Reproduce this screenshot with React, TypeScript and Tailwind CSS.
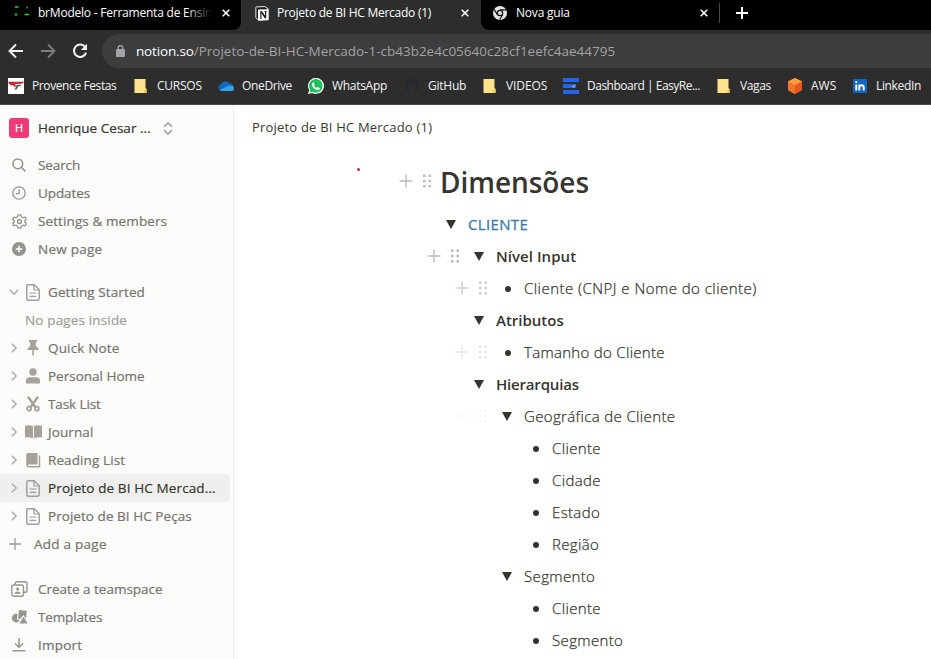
import type { ReactNode } from "react";

const ui = "font-['Open_Sans','Noto_Sans',sans-serif]";

function CloseIcon() {
  return (
    <svg width="8" height="8" viewBox="0 0 8 8" className="shrink-0">
      <path d="M.7 .7L7.3 7.3M7.3 .7L.7 7.3" stroke="#fff" strokeWidth="1.6" />
    </svg>
  );
}

function ChromeIcon() {
  return (
    <svg width="14" height="14" viewBox="0 0 14 14" className="shrink-0">
      <circle cx="7" cy="7" r="7" fill="#e4e6e9" />
      <circle cx="7" cy="7" r="3.3" fill="#111" />
      <circle cx="7" cy="7" r="2.1" fill="#e4e6e9" />
      <path d="M7 3.9H13.2M9.7 8.6L6.6 13.7M4.3 8.6L1.2 3.4" stroke="#111" strokeWidth="1.1" fill="none" />
    </svg>
  );
}

function NotionIcon() {
  return (
    <svg width="14" height="15" viewBox="0 0 14 15" className="shrink-0">
      <path d="M1.2 .9L9.8 .6L13.2 2.8V13.8L3.4 14.3L.9 11.5V1.4Z" fill="#161616" stroke="#f4f4f4" strokeWidth="1" />
      <path d="M3 3.6L13.2 3.2V13.8L3 14.3Z" fill="#fff" />
      <path d="M4.9 5.2H7L10 9.6V5.9L9.2 5.3V4.9H11.8V5.4L11.2 5.8V12.3H9.8L6.4 7.3V11.7L7.3 12.1V12.6H4.7V12.1L5.3 11.7V5.9L4.9 5.7Z" fill="#161616" />
    </svg>
  );
}

function TabStrip() {
  return (
    <div className="flex h-[30px] bg-black text-[12px] text-white">
      <div className="flex w-[241px] bg-[#2d2d2d]">
        <div className="flex w-full items-center rounded-br-[8px] bg-black pr-[11px] pb-[4px] pl-[14px]">
          <svg width="16" height="14" viewBox="0 0 16 14" className="shrink-0">
            <path d="M1 1H4.5M12.5 1.5H14M10.5 8.5H15" stroke="#18d52c" strokeWidth="1.5" />
            <path d="M1 8.5H3" stroke="#18d52c" strokeWidth="1.8" />
          </svg>
          <div className="relative ml-[8px] h-[18px] w-[174px] shrink-0 leading-[18px] tracking-[-0.22px] whitespace-nowrap">
            brModelo - Ferramenta de Ensin
            <div className="absolute top-0 right-0 h-full w-[26px] bg-linear-to-r from-transparent to-black" />
          </div>
          <div className="ml-auto"><CloseIcon /></div>
        </div>
      </div>
      <div className="flex w-[240px] items-center bg-[#2d2d2d] pr-[12px] pb-[4px] pl-[14px]">
        <NotionIcon />
        <span className="ml-[8px] tracking-[-0.25px] whitespace-nowrap">Projeto de BI HC Mercado (1)</span>
        <div className="ml-auto"><CloseIcon /></div>
      </div>
      <div className="flex flex-1 bg-[#2d2d2d]">
        <div className="flex flex-1 items-center rounded-bl-[8px] bg-black pb-[4px] pl-[12px]">
          <ChromeIcon />
          <span className="ml-[9px] w-[184px] tracking-[-0.2px]">Nova guia</span>
          <CloseIcon />
          <div className="ml-[11px] h-[20px] w-px bg-[#4c4c4c]" />
          <svg width="12" height="12" viewBox="0 0 12 12" className="ml-[16px]">
            <path d="M6 0V12M0 6H12" stroke="#fff" strokeWidth="2" />
          </svg>
        </div>
      </div>
    </div>
  );
}

function AddressBar() {
  return (
    <div className="flex h-[38px] items-start bg-[#2d2d2d] pt-[4px]">
      <div className="flex h-[34px] w-[102px] items-center pl-[8px]">
        <svg width="16" height="16" viewBox="0 0 16 16">
          <path d="M15 8H2M8 1.5L1.5 8L8 14.5" stroke="#f1f1f1" strokeWidth="1.9" fill="none" />
        </svg>
        <svg width="16" height="16" viewBox="0 0 16 16" className="ml-[16px]">
          <path d="M1 8H14M8 1.5L14.5 8L8 14.5" stroke="#7c7c7c" strokeWidth="1.8" fill="none" />
        </svg>
        <svg width="16" height="16" viewBox="0 0 16 16" className="ml-[16px]">
          <path d="M13.2 4.1A6.2 6.2 0 1 0 14.1 9.6" stroke="#f1f1f1" strokeWidth="2" fill="none" />
          <path d="M15 .8V7H8.8Z" fill="#f1f1f1" />
        </svg>
      </div>
      <div className="flex h-[34px] flex-1 items-center rounded-l-full bg-[#3d3d3d] pl-[14px]">
        <svg width="9" height="12" viewBox="0 0 9 12">
          <rect y="4" width="9" height="8" rx="1" fill="#a2a3a6" />
          <path d="M2.2 5V2.8A2.3 2.3 0 0 1 6.8 2.8V5" stroke="#a2a3a6" strokeWidth="1.3" fill="none" />
        </svg>
        <span className="ml-[11px] text-[13.5px] whitespace-nowrap text-[#a2a3a5]">
          <span className="tracking-[-0.16px] text-white">notion.so</span>/Projeto-de-BI-HC-Mercado-1-cb43b2e4c05640c28cf1eefc4ae44795
        </span>
      </div>
    </div>
  );
}

function FolderIcon() {
  return (
    <svg width="16" height="16" viewBox="0 0 16 16">
      <path d="M1.5 1H12.5V10L13.5 11V15H1.5Z" fill="#ffe38c" />
      <path d="M12 10.5L13.5 11V15H10.8Z" fill="#f5cb55" />
    </svg>
  );
}

function Bookmark({ icon, label, className }: { icon: ReactNode; label: string; className: string }) {
  return (
    <div className={`flex shrink-0 items-center gap-[8px] whitespace-nowrap ${className}`}>
      {icon}
      <span>{label}</span>
    </div>
  );
}

function BookmarksBar() {
  return (
    <div className="flex h-[37px] items-center border-b border-[#4a4747] bg-[#2d2d2d] pl-[8px] text-[12px] text-[#f3f3f3]">
      <Bookmark className="w-[125px] tracking-[-0.4px]" label="Provence Festas" icon={
        <svg width="16" height="16" viewBox="0 0 16 16">
          <path d="M0 0H16V16H0Z" fill="#fff" />
          <path d="M0 3.8H16Q15.2 5.6 13.4 5.8L6.8 5.9L8 7.4L7 9.6L5.6 7.6L2.6 7.2Q.8 5.9 0 3.8Z" fill="#c42a36" />
          <path d="M8.6 6.8H13.2L12.4 8.2H10.2L9.8 9.6L8.3 11.8L6.6 11.6L8 9Z" fill="#55545a" />
        </svg>} />
      <Bookmark className="w-[85px] tracking-[-0.25px]" label="CURSOS" icon={<FolderIcon />} />
      <Bookmark className="w-[90px] tracking-[-0.35px]" label="OneDrive" icon={
        <svg width="16" height="16" viewBox="0 0 16 16">
          <path d="M3.2 12.5A3.2 3.2 0 0 1 2.8 6.2A5 5 0 0 1 11.8 5.8A3.4 3.4 0 0 1 13 12.5Z" fill="#1168bd" />
          <path d="M2 12L10.5 7.5Q16 7.4 16 10.7A2.5 2.5 0 0 1 13.5 13H3.6Q2.5 13 2 12Z" fill="#35a3ea" />
        </svg>} />
      <Bookmark className="w-[96px] tracking-[-0.3px]" label="WhatsApp" icon={
        <svg width="16" height="16" viewBox="0 0 16 16">
          <path d="M0 16L1.1 12A8 8 0 1 1 4.1 14.9Z" fill="#fff" />
          <path d="M1.4 14.6L2.2 11.8A6.8 6.8 0 1 1 4.4 13.8Z" fill="#1fc15a" />
          <path d="M5.4 3.9L6.7 6.3L6 7.3Q7 9.2 8.9 10L9.8 9.1L12 10.2Q11.8 12.2 9.6 12.1Q5 11.3 4 6.8Q3.9 4.5 5.4 3.9Z" fill="#fff" />
        </svg>} />
      <Bookmark className="w-[78px] tracking-[-0.25px]" label="GitHub" icon={
        <svg width="16" height="16" viewBox="0 0 16 16">
          <path d="M8 .8A7.3 7.3 0 0 0 5.7 15V12.5Q3.5 11 4 7.5L4 4L6 4.8H10L12 4V7.5Q12.5 11 10.3 12.5V15A7.3 7.3 0 0 0 8 .8Z" fill="#24292e" />
        </svg>} />
      <Bookmark className="w-[81px] tracking-[-0.1px]" label="VIDEOS" icon={<FolderIcon />} />
      <Bookmark className="w-[153px] tracking-[-0.5px]" label="Dashboard | EasyRe..." icon={
        <svg width="16" height="16" viewBox="0 0 16 16">
          <path d="M0 0H16V4H0ZM0 6H13V10H0ZM0 12H16V16H0Z" fill="#2465e8" />
          <path d="M8.5 8.7L12.5 6.6L11 9.6Z" fill="#a9c4fa" />
        </svg>} />
      <Bookmark className="w-[71px] tracking-[-0.35px]" label="Vagas" icon={<FolderIcon />} />
      <Bookmark className="w-[65px]" label="AWS" icon={
        <svg width="16" height="16" viewBox="0 0 16 16">
          <path d="M8 0L15 3.5V12L8 16L1 12V3.5Z" fill="#f58536" />
          <path d="M1 3.5L8 7V16L1 12Z" fill="#f0762b" />
          <path d="M8 7L15 3.5V12L8 16Z" fill="#e6561e" />
          <path d="M8 0L15 3.5L8 7L1 3.5Z" fill="#ff9c3e" />
        </svg>} />
      <Bookmark className="tracking-[-0.35px]" label="LinkedIn" icon={
        <svg width="16" height="16" viewBox="0 0 16 16">
          <rect x="1" y="1" width="14" height="14" rx="1" fill="#1266c3" />
          <path d="M4.3 6.5V12.5M4.3 3.2V5.1M7.3 6.5V12.5M7.6 9Q8 7.3 9.8 7.3Q11.7 7.3 11.7 9.5V12.5" stroke="#fff" strokeWidth="1.9" fill="none" />
        </svg>} />
    </div>
  );
}

function MenuItem({ icon, label, className = "" }: { icon: ReactNode; label: string; className?: string }) {
  return (
    <div className={`flex h-[28px] items-center pl-[10px] whitespace-nowrap ${className}`}>
      <span className="mr-[10px] flex w-[18px] justify-center">{icon}</span>
      {label}
    </div>
  );
}

function PageIcon() {
  return (
    <svg width="14" height="17" viewBox="0 0 14 17">
      <path d="M2.3 .8H8.2L13.2 5.8V14.5Q13.2 16.2 11.5 16.2H2.5Q.8 16.2 .8 14.5V2.3Q.8 .8 2.3 .8Z" fill="none" stroke="#9d9c98" strokeWidth="1.4" />
      <path d="M8 1V6H13M3.6 9H10.4M3.6 12.3H10.4" fill="none" stroke="#9d9c98" strokeWidth="1.2" />
    </svg>
  );
}

function PageRow({ icon, label, open, className = "" }: { icon: ReactNode; label: string; open?: boolean; className?: string }) {
  return (
    <div className={`flex h-[28px] items-center pl-[9px] whitespace-nowrap ${className}`}>
      <svg width="10" height="10" viewBox="0 0 10 10" className="shrink-0">
        <path d={open ? "M.7 2.8L5 7.2L9.3 2.8" : "M2.8 .7L7.2 5L2.8 9.3"} fill="none" stroke="#a9a8a4" strokeWidth="1.3" />
      </svg>
      <span className="mr-[6px] ml-[5px] flex w-[18px] shrink-0 justify-center">{icon}</span>
      {label}
    </div>
  );
}

function Sidebar() {
  return (
    <aside className="flex w-[234px] shrink-0 flex-col overflow-hidden border-r border-[#efefee] bg-[#fbfbfa] text-[13.5px] font-medium tracking-[0.1px] text-[#75746f] [-webkit-text-stroke:0.2px]">
      <div className="mt-[9px] flex h-[28px] items-center pl-[9px] text-[#37352f]">
        <div className="flex size-[20px] items-center justify-center rounded-[3px] bg-[#ee3a79] text-[11px] text-white">H</div>
        <span className="ml-[9px] w-[125px] tracking-[0.04px] whitespace-nowrap">Henrique Cesar ...</span>
        <svg width="10" height="13" viewBox="0 0 10 13">
          <path d="M1.2 4.6L5 1L8.8 4.6M1.2 8.4L5 12L8.8 8.4" stroke="#9d9c98" strokeWidth="1.5" fill="none" />
        </svg>
      </div>
      <div className="mt-[9px]">
        <MenuItem label="Search" className="tracking-[-0.1px]" icon={
          <svg width="14" height="14" viewBox="0 0 14 14" fill="none" stroke="#96958f" strokeWidth="1.5">
            <circle cx="5.8" cy="5.8" r="4.9" /><path d="M9.3 9.3L13.4 13.4" />
          </svg>} />
        <MenuItem label="Updates" className="tracking-[-0.1px]" icon={
          <svg width="14" height="14" viewBox="0 0 14 14" fill="none" stroke="#96958f" strokeWidth="1.3">
            <circle cx="7" cy="7" r="6.2" /><path d="M7.2 3.2V7.6H3.8" />
          </svg>} />
        <MenuItem label="Settings & members" icon={
          <svg width="15" height="15" viewBox="0 0 15 15" fill="none" stroke="#96958f" strokeWidth="1.3" strokeLinejoin="round">
            <path d="M6.2 .8H8.8L9.4 2.8L11.1 3.8L13.1 3.2L14.3 5.4L12.8 6.7V8.3L14.3 9.6L13.1 11.8L11.1 11.2L9.4 12.2L8.8 14.2H6.2L5.6 12.2L3.9 11.2L1.9 11.8L.7 9.6L2.2 8.3V6.7L.7 5.4L1.9 3.2L3.9 3.8L5.6 2.8Z" />
            <circle cx="7.5" cy="7.5" r="2" />
          </svg>} />
        <MenuItem label="New page" className="tracking-[0.25px]" icon={
          <svg width="14" height="14" viewBox="0 0 14 14">
            <circle cx="7" cy="7" r="7" fill="#96958f" /><path d="M7 3.8V10.2M3.8 7H10.2" stroke="#fff" strokeWidth="1.5" />
          </svg>} />
      </div>
      <div className="mt-[15px]">
        <PageRow open label="Getting Started" icon={<PageIcon />} />
        <div className="flex h-[28px] items-center pl-[25px] tracking-[0.15px] text-[#a09f9b]">No pages inside</div>
        <PageRow label="Quick Note" className="tracking-[0.15px]" icon={
          <svg width="12" height="16" viewBox="0 0 12 16" fill="#a6a299">
            <path d="M2 0H10V1.5L8.8 2.5V6L11.5 8.5V10H6.8V15L6 16L5.2 15V10H.5V8.5L3.2 6V2.5L2 1.5Z" />
          </svg>} />
        <PageRow label="Personal Home" className="tracking-normal" icon={
          <svg width="14" height="16" viewBox="0 0 14 16" fill="#a6a299">
            <circle cx="7" cy="4" r="3.7" /><path d="M0 15.5V13Q0 9.3 4 9.3H10Q14 9.3 14 13V15.5Z" />
          </svg>} />
        <PageRow label="Task List" className="tracking-[-0.1px]" icon={
          <svg width="14" height="16" viewBox="0 0 14 16" fill="none" stroke="#a6a299">
            <path d="M2 .8L9.3 11M12 .8L4.7 11" strokeWidth="2.4" />
            <circle cx="3.1" cy="12.7" r="2" strokeWidth="1.7" /><circle cx="10.9" cy="12.7" r="2" strokeWidth="1.7" />
          </svg>} />
        <PageRow label="Journal" icon={
          <svg width="17" height="14" viewBox="0 0 17 14" fill="#a6a299">
            <path d="M0 .8Q5 -.3 8 1.2V13.2Q4 11.8 0 12.5ZM17 .8Q12 -.3 9 1.2V13.2Q13 11.8 17 12.5Z" />
          </svg>} />
        <PageRow label="Reading List" icon={
          <svg width="15" height="15" viewBox="0 0 15 15" fill="#a6a299">
            <path d="M1.5 0H11.5V11.5H2.5L1.5 12.2L3 13H12.8V2.5H14.2V14.5H2.5Q.2 14 .2 12V1.5Z" />
          </svg>} />
        <PageRow className="mr-[3px] rounded-r-[3px] bg-[#efefee] tracking-[0.12px] text-[#37352f]" label="Projeto de BI HC Mercad..." icon={<PageIcon />} />
        <PageRow label="Projeto de BI HC Peças" className="tracking-[0.05px]" icon={<PageIcon />} />
        <div className="flex h-[28px] items-center pl-[9px] tracking-[0.25px]">
          <svg width="12" height="12" viewBox="0 0 12 12" className="mr-[13px]">
            <path d="M6 0V12M0 6H12" stroke="#9d9c98" strokeWidth="1.3" />
          </svg>
          Add a page
        </div>
      </div>
      <div className="mt-[17px]">
        <MenuItem label="Create a teamspace" className="tracking-normal" icon={
          <svg width="17" height="16" viewBox="0 0 17 16" fill="none" stroke="#96958f" strokeWidth="1.4">
            <path d="M4.3 3.5V2.5Q4.3 .8 6 .8H14.3Q16 .8 16 2.5V9.5Q16 11.3 14.3 11.3H13" />
            <rect x=".8" y="4" width="11.7" height="11.2" rx="2" />
            <circle cx="6.6" cy="8" r="1.5" fill="#96958f" stroke="none" /><path d="M3.6 12.8Q3.8 10.4 6.6 10.4T9.6 12.8Z" fill="#96958f" stroke="none" />
          </svg>} />
        <MenuItem label="Templates" className="tracking-[-0.15px]" icon={
          <svg width="17" height="14" viewBox="0 0 17 14" fill="#96958f">
            <path d="M8 0L15.8 .8L15 9L12.5 5L9 9.2L7.2 8.5Z" />
            <path d="M6.6 4A4.3 4.3 0 1 0 7.8 11.5L8.4 10L5.9 9.3Z" /><path d="M12.5 6.8L16.6 13.5H8.4Z" />
          </svg>} />
        <MenuItem label="Import" className="tracking-[0.2px]" icon={
          <svg width="14" height="14" viewBox="0 0 14 14" fill="none" stroke="#96958f" strokeWidth="1.5">
            <path d="M7 0V9M3 5.5L7 9.3L11 5.5M.5 12.7H13.5" />
          </svg>} />
      </div>
    </aside>
  );
}

function Handle({ className }: { className: string }) {
  return (
    <svg width="34" height="16" viewBox="0 0 34 16" className={`shrink-0 ${className}`}>
      <path d="M7 1.5V14.5M.5 8H13.5" stroke="#bdbcba" strokeWidth="1.4" />
      <g fill="#bdbcba">
        <path d="M24 1.5h2.6v2.6H24zM24 6.7h2.6v2.6H24zM24 11.9h2.6v2.6H24zM29.5 1.5h2.6v2.6h-2.6zM29.5 6.7h2.6v2.6h-2.6zM29.5 11.9h2.6v2.6h-2.6z" />
      </g>
    </svg>
  );
}

function Row({ indent, bullet, handle, label, className = "font-light tracking-[0.36px] [-webkit-text-stroke:0.25px]" }: { indent: string; bullet?: boolean; handle?: string; label: string; className?: string }) {
  return (
    <div className={`flex h-[32px] items-center ${indent}`}>
      <Handle className={handle ?? "invisible"} />
      <span className="ml-[5px] flex w-[28px] shrink-0 items-center justify-center">
        {bullet ? (
          <span className="mt-px size-[6px] rounded-full bg-[#37352f]" />
        ) : (
          <svg width="10" height="9" viewBox="0 0 10 9" className="mr-[2px]"><path d="M0 0H10L5 9Z" fill="#37352f" /></svg>
        )}
      </span>
      <span className={`ml-[2px] whitespace-nowrap ${className}`}>{label}</span>
    </div>
  );
}

export default function App() {
  return (
    <div className={`flex h-[659px] w-[931px] flex-col overflow-hidden bg-white ${ui}`}>
      <TabStrip />
      <AddressBar />
      <BookmarksBar />
      <div className="flex min-h-0 flex-1">
        <Sidebar />
        <main className="relative flex-1 overflow-hidden text-[15px] text-[#37352f]">
          <div className="flex h-[45px] items-center pl-[18px] text-[13px] tracking-[0.2px]">Projeto de BI HC Mercado (1)</div>
          <div className="absolute top-[63px] left-[123px] size-[3px] rounded-full bg-[#d8234a]" />
          <div className="mt-[11px] flex h-[42px] items-center pl-[165px]">
            <Handle className="mb-[3px]" />
            <h1 className="ml-[7px] text-[28px] font-semibold tracking-[-0.05px]">Dimensões</h1>
          </div>
          <div className="mt-[5px]">
            <Row indent="pl-[165px]" label="CLIENTE" className="tracking-[0.35px] text-[#3a7ba6] [-webkit-text-stroke:0.3px]" />
            <Row indent="pl-[193px]" handle="" label="Nível Input" className="font-semibold tracking-[0.05px]" />
            <Row indent="pl-[221px]" handle="opacity-70" bullet label="Cliente (CNPJ e Nome do cliente)" className="font-light tracking-[0.46px] [-webkit-text-stroke:0.25px]" />
            <Row indent="pl-[193px]" label="Atributos" className="font-semibold" />
            <Row indent="pl-[221px]" handle="opacity-35" bullet label="Tamanho do Cliente" className="font-light tracking-[0.3px] [-webkit-text-stroke:0.25px]" />
            <Row indent="pl-[193px]" label="Hierarquias" className="font-semibold tracking-[-0.18px]" />
            <Row indent="pl-[221px]" handle="opacity-8" label="Geográfica de Cliente" />
            <Row indent="pl-[249px]" bullet label="Cliente" />
            <Row indent="pl-[249px]" bullet label="Cidade" />
            <Row indent="pl-[249px]" bullet label="Estado" />
            <Row indent="pl-[249px]" bullet label="Região" />
            <Row indent="pl-[221px]" label="Segmento" />
            <Row indent="pl-[249px]" bullet label="Cliente" />
            <Row indent="pl-[249px]" bullet label="Segmento" />
          </div>
        </main>
      </div>
    </div>
  );
}
